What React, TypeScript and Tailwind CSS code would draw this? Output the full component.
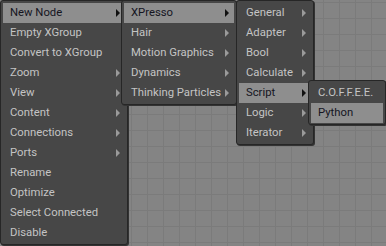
import React from "react";

type Item = { label: string; sub?: boolean; active?: boolean };

const MAIN: Item[] = [
  { label: "New Node", sub: true, active: true },
  { label: "Empty XGroup" },
  { label: "Convert to XGroup" },
  { label: "Zoom", sub: true },
  { label: "View", sub: true },
  { label: "Content", sub: true },
  { label: "Connections", sub: true },
  { label: "Ports", sub: true },
  { label: "Rename" },
  { label: "Optimize" },
  { label: "Select Connected" },
  { label: "Disable" },
];

const NODES: Item[] = [
  { label: "XPresso", sub: true, active: true },
  { label: "Hair", sub: true },
  { label: "Motion Graphics", sub: true },
  { label: "Dynamics", sub: true },
  { label: "Thinking Particles", sub: true },
];

const XPRESSO: Item[] = [
  { label: "General", sub: true },
  { label: "Adapter", sub: true },
  { label: "Bool", sub: true },
  { label: "Calculate", sub: true },
  { label: "Script", sub: true, active: true },
  { label: "Logic", sub: true },
  { label: "Iterator", sub: true },
];

const SCRIPT: Item[] = [{ label: "C.O.F.F.E.E." }, { label: "Python", active: true }];

function Arrow({ active }: { active?: boolean }) {
  return (
    <svg width="4" height="8" viewBox="0 0 4 8" className="shrink-0">
      <path d="M0 0 L4 4 L0 8 Z" fill={active ? "#111" : "#9a9a9a"} />
    </svg>
  );
}

function Menu({ items, className }: { items: Item[]; className: string }) {
  return (
    <div
      className={`absolute flex flex-col rounded-[3px] border border-[#262626] bg-[#474747] px-[2px] pt-[2px] pb-px shadow-[1px_1px_0_#333] ${className}`}
    >
      {items.map((it) => (
        <div
          key={it.label}
          className={`flex h-5 items-center justify-between pl-[7px] pr-[5px] ${
            it.active ? "bg-[#8e8e8e] text-[#15151f]" : "text-[#c4c4c4]"
          }`}
        >
          <span className="whitespace-nowrap">{it.label}</span>
          {it.sub && <Arrow active={it.active} />}
        </div>
      ))}
    </div>
  );
}

export default function App() {
  return (
    <div
      className="relative h-[246px] w-[386px] overflow-hidden bg-[#848484] bg-[linear-gradient(to_right,#7b7b7b_1px,transparent_1px),linear-gradient(to_bottom,#7b7b7b_1px,transparent_1px)] bg-[size:16px_16px] bg-[position:3px_2px] text-[11.3px] leading-none"
      style={{ fontFamily: "Roboto, 'Liberation Sans', sans-serif" }}
    >
      <Menu items={MAIN} className="left-0 top-0 h-[245px] w-[128px]" />
      <Menu items={NODES} className="left-[121px] top-0 w-[116px]" />
      <Menu items={XPRESSO} className="left-[236px] top-0 w-[78px]" />
      <Menu items={SCRIPT} className="left-[308px] top-[80px] w-[78px]" />
    </div>
  );
}
